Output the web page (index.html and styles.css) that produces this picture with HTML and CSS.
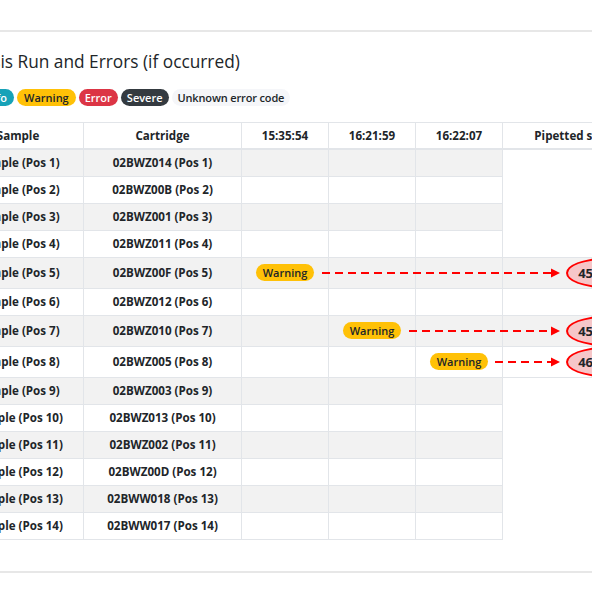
FILE: index.html
```html
<!DOCTYPE html>
<html lang="en">
<head>
<meta charset="utf-8">
<title>Analysis Run and Errors</title>
<link rel="stylesheet" href="styles.css">
</head>
<body>
<section class="run">
  <h4 class="run-title">Analysis Run and Errors (if occurred)</h4>
  <div class="legend">
    <span class="badge badge-info">Info</span>
    <span class="badge badge-warning">Warning</span>
    <span class="badge badge-danger">Error</span>
    <span class="badge badge-dark">Severe</span>
    <span class="badge badge-light">Unknown error code</span>
  </div>
  <div class="table-wrap">
    <table class="run-table">
      <colgroup>
        <col class="c-sample"><col class="c-cart"><col class="c-time"><col class="c-time"><col class="c-time"><col class="c-pip">
      </colgroup>
      <thead>
        <tr><th>Sample</th><th>Cartridge</th><th>15:35:54</th><th>16:21:59</th><th>16:22:07</th><th>Pipetted sample volume</th></tr>
      </thead>
      <tbody>
        <tr><td>Sample (Pos 1)</td><td>02BWZ014 (Pos 1)</td><td></td><td></td><td></td></tr>
        <tr><td>Sample (Pos 2)</td><td>02BWZ00B (Pos 2)</td><td></td><td></td><td></td></tr>
        <tr><td>Sample (Pos 3)</td><td>02BWZ001 (Pos 3)</td><td></td><td></td><td></td></tr>
        <tr><td>Sample (Pos 4)</td><td>02BWZ011 (Pos 4)</td><td></td><td></td><td></td></tr>
        <tr><td>Sample (Pos 5)</td><td>02BWZ00F (Pos 5)</td><td><span class="badge badge-warning">Warning</span></td><td></td><td></td><td class="pip"><span class="volume">455.1 µL</span></td></tr>
        <tr><td>Sample (Pos 6)</td><td>02BWZ012 (Pos 6)</td><td></td><td></td><td></td><td class="pip"></td></tr>
        <tr><td>Sample (Pos 7)</td><td>02BWZ010 (Pos 7)</td><td></td><td><span class="badge badge-warning">Warning</span></td><td></td><td class="pip"><span class="volume">458.3 µL</span></td></tr>
        <tr><td>Sample (Pos 8)</td><td>02BWZ005 (Pos 8)</td><td></td><td></td><td><span class="badge badge-warning">Warning</span></td><td class="pip"><span class="volume">462.0 µL</span></td></tr>
        <tr><td>Sample (Pos 9)</td><td>02BWZ003 (Pos 9)</td><td></td><td></td><td></td></tr>
        <tr><td>Sample (Pos 10)</td><td>02BWZ013 (Pos 10)</td><td></td><td></td><td></td></tr>
        <tr><td>Sample (Pos 11)</td><td>02BWZ002 (Pos 11)</td><td></td><td></td><td></td></tr>
        <tr><td>Sample (Pos 12)</td><td>02BWZ00D (Pos 12)</td><td></td><td></td><td></td></tr>
        <tr><td>Sample (Pos 13)</td><td>02BWW018 (Pos 13)</td><td></td><td></td><td></td></tr>
        <tr><td>Sample (Pos 14)</td><td>02BWW017 (Pos 14)</td><td></td><td></td><td></td></tr>
      </tbody>
    </table>
    <svg class="arrows" width="760" height="420" viewBox="0 0 760 420" aria-hidden="true">
      <g stroke="#ff0000" stroke-width="2" stroke-dasharray="8 5" fill="none">
        <line x1="370" y1="151" x2="601" y2="151"/>
        <line x1="457" y1="209" x2="601" y2="209"/>
        <line x1="543" y1="240" x2="601" y2="240"/>
      </g>
      <g fill="#ff0000">
        <polygon points="599,146.5 608,151 599,155.5"/>
        <polygon points="599,204.5 608,209 599,213.5"/>
        <polygon points="599,235.5 608,240 599,244.5"/>
      </g>
    </svg>
  </div>
</section>
</body>
</html>
```
FILE: styles.css
```css
html, body {
  margin: 0;
  background: #fff;
}
body {
  overflow: hidden;
  font-family: "Open Sans", "Noto Sans", sans-serif;
  color: #212529;
}
.run {
  margin: 30px 0 0 -60px;
  width: 900px;
  border-top: 2px solid #e7e7e7;
  border-bottom: 2px solid #e7e7e7;
  padding-bottom: 31px;
}
.run-title {
  margin: 18px 0 0 8px;
  font-size: 17.3px;
  font-weight: 400;
  line-height: 24px;
  white-space: nowrap;
}
.legend {
  display: flex;
  gap: 3px;
  margin: 15px 0 0 39px;
}
.badge {
  display: inline-block;
  padding: 3px 7px;
  font-size: 11px;
  font-weight: 600;
  line-height: 11px;
  border-radius: 10px;
  white-space: nowrap;
}
.legend .badge-danger,
.legend .badge-dark,
.legend .badge-light {
  padding: 3px 6px;
}
.legend .badge-light {
  letter-spacing: -0.15px;
}
.badge-info { background: #17a2b8; color: #fff; }
.badge-warning { background: #ffc107; color: #212529; }
.badge-danger { background: #dc3545; color: #fff; }
.badge-dark { background: #343a40; color: #fff; }
.badge-light { background: #f5f6f9; color: #212529; }

.table-wrap {
  position: relative;
  margin: 16px 0 0 12px;
  width: max-content;
}
.run-table {
  border-collapse: collapse;
  table-layout: fixed;
  font-size: 11.6px;
  font-weight: 700;
}
.c-sample { width: 131px; }
.c-cart { width: 158px; }
.c-time { width: 87px; }
.c-pip { width: 204px; }
.run-table th,
.run-table td {
  border: 1px solid #e2e5e9;
  padding: 4px 8px;
  line-height: 18px;
  text-align: center;
  vertical-align: middle;
  white-space: nowrap;
}
.run-table th {
  line-height: 17px;
  border-bottom-width: 2px;
}
.run-table tbody tr:nth-child(odd) td {
  background: #f2f2f2;
}
.run-table td.pip {
  padding: 0 8px;
}
.volume {
  display: block;
  width: fit-content;
  margin: 0 auto;
  padding: 5px 10px;
  font-size: 13px;
  font-weight: 700;
  line-height: 16px;
  border: 2px solid #ff0000;
  border-radius: 50%;
  background: #f6c6c8;
}
.arrows {
  position: absolute;
  left: 0;
  top: 0;
  pointer-events: none;
  overflow: visible;
}
```
